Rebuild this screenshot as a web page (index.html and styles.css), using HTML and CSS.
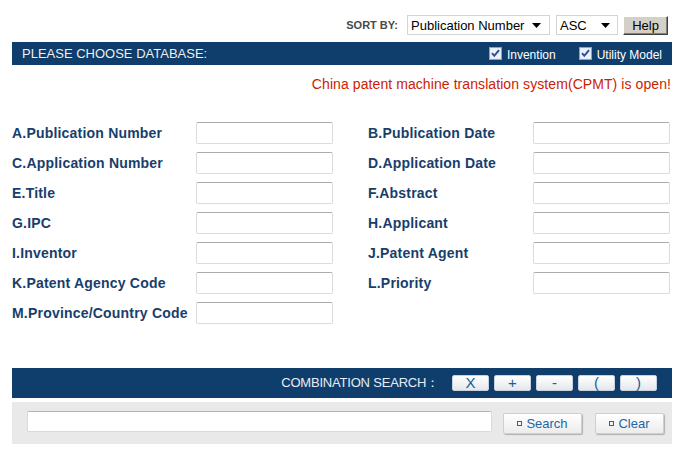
FILE: index.html
```html
<!DOCTYPE html>
<html>
<head>
<meta charset="utf-8">
<title>Patent Search</title>
<link rel="stylesheet" href="styles.css">
</head>
<body>
<div class="page">
  <div class="sortbar">
    <span class="sort-label">SORT BY:</span>
    <span class="select select-field">Publication Number<svg class="caret" width="9" height="5" viewBox="0 0 9 5"><path d="M0 0H9L4.5 5Z" fill="#000"/></svg></span>
    <span class="select select-order">ASC<svg class="caret" width="9" height="5" viewBox="0 0 9 5"><path d="M0 0H9L4.5 5Z" fill="#000"/></svg></span>
    <button class="help">Help</button>
  </div>

  <div class="dbbar">
    <span class="dbtitle">PLEASE CHOOSE DATABASE:</span>
    <label class="check"><svg width="13" height="13" viewBox="0 0 13 13"><rect x="0.5" y="0.5" width="12" height="12" fill="#dfe6f1" stroke="#8ca2c6"/><rect x="1.5" y="1.5" width="10" height="10" fill="#eef2f8"/><path d="M3 6.2L5.3 8.8L10 3.2" fill="none" stroke="#2c4f9a" stroke-width="2"/></svg>Invention</label>
    <label class="check"><svg width="13" height="13" viewBox="0 0 13 13"><rect x="0.5" y="0.5" width="12" height="12" fill="#dfe6f1" stroke="#8ca2c6"/><rect x="1.5" y="1.5" width="10" height="10" fill="#eef2f8"/><path d="M3 6.2L5.3 8.8L10 3.2" fill="none" stroke="#2c4f9a" stroke-width="2"/></svg>Utility Model</label>
  </div>

  <p class="notice">China patent machine translation system(CPMT) is open!</p>

  <div class="form">
    <div class="field"><label>A.Publication Number</label><input type="text"></div>
    <div class="field right"><label>B.Publication Date</label><input type="text"></div>
    <div class="field"><label>C.Application Number</label><input type="text"></div>
    <div class="field right"><label>D.Application Date</label><input type="text"></div>
    <div class="field"><label>E.Title</label><input type="text"></div>
    <div class="field right"><label>F.Abstract</label><input type="text"></div>
    <div class="field"><label>G.IPC</label><input type="text"></div>
    <div class="field right"><label>H.Applicant</label><input type="text"></div>
    <div class="field"><label>I.Inventor</label><input type="text"></div>
    <div class="field right"><label>J.Patent Agent</label><input type="text"></div>
    <div class="field"><label>K.Patent Agency Code</label><input type="text"></div>
    <div class="field right"><label>L.Priority</label><input type="text"></div>
    <div class="field"><label>M.Province/Country Code</label><input type="text"></div>
  </div>

  <div class="combobar">
    <span class="combotitle">COMBINATION SEARCH：</span>
    <button class="op">X</button>
    <button class="op">+</button>
    <button class="op">-</button>
    <button class="op">(</button>
    <button class="op">)</button>
  </div>

  <div class="searchpanel">
    <input type="text" class="query">
    <button class="action action-search"><span class="sq"></span>Search</button>
    <button class="action action-clear"><span class="sq"></span>Clear</button>
  </div>
</div>
</body>
</html>
```

FILE: styles.css
```css
* { box-sizing: border-box; }
body {
  margin: 0;
  background: #fff;
  font-family: "Liberation Sans", Arial, sans-serif;
}
.page {
  padding: 0 12px;
}
.sortbar {
  display: flex;
  justify-content: flex-end;
  align-items: center;
  padding-top: 15px;
  padding-right: 4px;
  height: 35px;
}
.sort-label {
  font-size: 11px;
  font-weight: bold;
  color: #4a4a4a;
  margin-right: 9px;
}
.select {
  display: flex;
  align-items: center;
  justify-content: space-between;
  height: 20px;
  border: 1px solid #d4d4d4;
  font-size: 13px;
  color: #000;
  padding: 0 8px 0 3px;
  white-space: nowrap;
}
.select-field { width: 143px; }
.select-order { width: 62px; margin-left: 6px; padding-right: 7px; }
.caret { flex: none; }
.help {
  margin-left: 5px;
  width: 45px;
  height: 19px;
  background: #d4d0c8;
  border: 1px solid;
  border-color: #fff #404040 #404040 #fff;
  box-shadow: inset -1px -1px 0 #808080;
  font-family: "Liberation Sans", Arial, sans-serif;
  font-size: 13px;
  color: #000;
  padding: 0;
}
.dbbar {
  margin-top: 7px;
  height: 23px;
  background: #0f3e6c;
  display: flex;
  align-items: center;
  padding: 0 10px;
}
.dbtitle {
  flex: 1;
  font-size: 13px;
  color: #eef2f7;
  text-shadow: 0 0 1px #0a2a4a;
}
.check {
  display: flex;
  align-items: center;
  font-size: 12px;
  color: #fff;
  margin-top: 3px;
}
.check svg { margin-right: 5px; margin-top: -3px; }
.check + .check { margin-left: 23px; }
.notice {
  margin: 11px 1px 0 0;
  text-align: right;
  font-size: 14px;
  line-height: 16px;
  letter-spacing: 0.08px;
  color: #cc2200;
}
.form {
  margin-top: 30px;
  display: grid;
  grid-template-columns: 321px 302px;
  column-gap: 35px;
  row-gap: 8px;
}
.field {
  display: flex;
  align-items: center;
  height: 22px;
}
.field label {
  flex: 1;
  font-size: 14px;
  font-weight: bold;
  letter-spacing: 0.2px;
  color: #183e6c;
  white-space: nowrap;
}
.field input {
  width: 137px;
  height: 22px;
  border: 1px solid #dcdcdc;
  border-top-color: #ababab;
  border-radius: 2px;
  background: #fff;
}
.combobar {
  margin-top: 44px;
  height: 30px;
  background: #0f3e6c;
  display: flex;
  align-items: center;
  justify-content: flex-end;
  padding-right: 15px;
}
.combotitle {
  font-size: 13px;
  color: #e6edf5;
  margin-right: 13px;
  letter-spacing: -0.2px;
}
.op {
  width: 37px;
  height: 16px;
  margin-left: 5px;
  padding: 0;
  border: 1px solid #c9d2dc;
  border-radius: 2px;
  background: linear-gradient(#ffffff, #e4e8ec);
  font-family: "Liberation Sans", Arial, sans-serif;
  font-size: 15px;
  line-height: 14px;
  color: #1b5c96;
}
.op:first-of-type { margin-left: 0; }
.searchpanel {
  margin-top: 4px;
  height: 42px;
  background: #e9e9e9;
  display: flex;
  align-items: flex-start;
  padding: 9px 8px 0 15px;
}
.query {
  width: 465px;
  height: 21px;
  border: 1px solid #dadada;
  border-top-color: #b4b4b4;
  border-radius: 2px;
  background: #fff;
}
.action {
  margin-top: 2px;
  height: 21px;
  display: flex;
  align-items: center;
  justify-content: center;
  border: 1px solid #cfcfcf;
  border-radius: 2px;
  background: linear-gradient(#ffffff, #ececec);
  box-shadow: 1px 1px 1px rgba(0,0,0,0.25);
  font-family: "Liberation Sans", Arial, sans-serif;
  font-size: 13px;
  color: #2067a8;
  padding: 0;
}
.action-search { width: 79px; margin-left: 11px; }
.action-clear { width: 69px; margin-left: 13px; }
.sq {
  width: 5px;
  height: 5px;
  border: 1px solid #2067a8;
  margin-right: 4px;
}
```
